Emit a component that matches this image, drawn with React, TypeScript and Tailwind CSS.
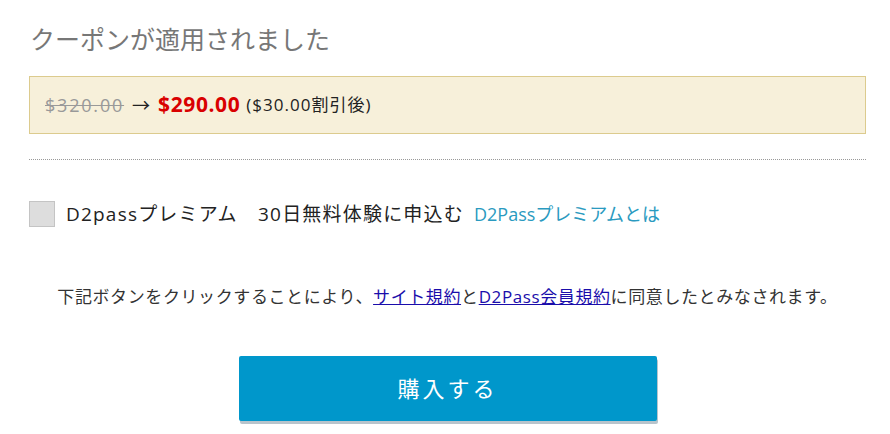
const font = "font-['Open_Sans','Noto_Sans_CJK_JP',sans-serif]";

export default function App() {
  return (
    <div className={`w-[890px] h-[434px] bg-white overflow-hidden pl-[29px] pr-[24px] ${font}`}>
      <h2 className="pt-[22px] text-[25px] leading-[34px] text-[#777] pl-[1px]">クーポンが適用されました</h2>

      <div className="mt-[20px] h-[58px] flex items-center px-[15px] border border-[#dccb8e] bg-[#f7f0da] text-[18px] text-[#222]">
        <span className="text-[#999] line-through tracking-[1.8px]">$320.00</span>
        <span className="mx-[8px]">→</span>
        <span className="text-[#d90000] font-bold text-[21px] tracking-[0.6px] mr-[6px]">$290.00</span>
        <span className="text-[17px] tracking-[1px]">($30.00割引後)</span>
      </div>

      <div className="mt-[25px] border-t border-dotted border-[#999]"></div>

      <div className="mt-[41px] flex items-center h-[26px]">
        <div className="w-[26px] h-[26px] bg-[#dddddd] border border-[#c4c4c4]"></div>
        <span className="ml-[11px] text-[19px] tracking-[1.2px] text-[#222]">D2passプレミアム　30日無料体験に申込む</span>
        <a className="ml-[10px] text-[18px] text-[#2a9ac0]">D2Passプレミアムとは</a>
      </div>

      <p className="mt-[58px] text-center text-[17px] tracking-[0.6px] text-[#333] leading-[24px]">
        下記ボタンをクリックすることにより、<a className="text-[#1a0dab] underline">サイト規約</a>と<a className="text-[#1a0dab] underline">D2Pass会員規約</a>に同意したとみなされます。
      </p>

      <div className="mt-[47px] flex justify-center">
        <button className="w-[418px] h-[65px] rounded-[2px] bg-[#0097cb] text-white text-[22px] tracking-[3px] shadow-[1px_3px_0_#b8c4cc]">
          購入する
        </button>
      </div>
    </div>
  );
}
